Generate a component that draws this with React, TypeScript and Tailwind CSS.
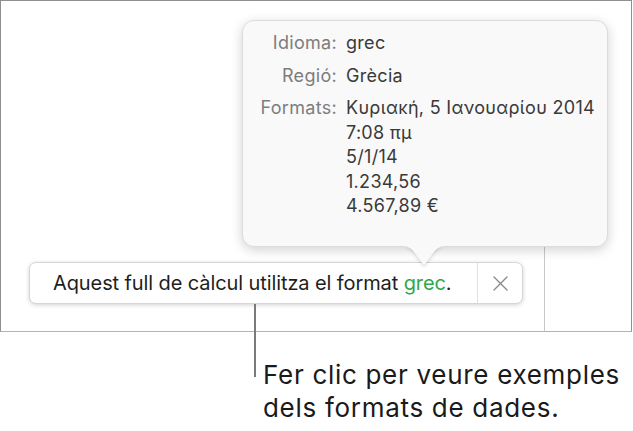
import React from 'react';

const font = { fontFamily: 'Inter, "Noto Sans", sans-serif' };

const rows: { label: string; values: string[] }[] = [
  { label: 'Idioma:', values: ['grec'] },
  { label: 'Regió:', values: ['Grècia'] },
  {
    label: 'Formats:',
    values: ['Κυριακή, 5 Ιανουαρίου 2014', '7:08 πμ', '5/1/14', '1.234,56', '4.567,89 €'],
  },
];

const Popover: React.FC = () => (
  <div className="absolute left-[242px] top-[20px] w-[366px] h-[227px]">
    {/* body */}
    <div className="relative z-10 w-full h-full rounded-[12px] bg-[#f9f9f9] border border-[#dcdcdc] shadow-[0_3px_12px_rgba(0,0,0,0.18)] pt-[10px]">
      <div className="flex flex-col gap-[8px]">
        {rows.map((r) => (
          <div key={r.label} className="flex">
            <div className="w-[94px] text-right text-[18px] leading-[24px] text-[#7d7d7d] tracking-[0.3px]">
              {r.label}
            </div>
            <div className="pl-[9px] flex flex-col text-[18px] leading-[24.5px] text-[#3a3a3a] tracking-[0.3px]">
              {r.values.map((v) => (
                <span key={v}>{v}</span>
              ))}
            </div>
          </div>
        ))}
      </div>
    </div>
    {/* arrow */}
    <svg
      className="absolute z-20 left-[158px] top-[225px]"
      width="48"
      height="22"
      viewBox="0 0 48 22"
      style={{ filter: 'drop-shadow(0 2px 1.5px rgba(0,0,0,0.14))' }}
    >
      <path d="M0 1 C8 1 10 2 14 7 L23 19 Q24 20.5 25 19 L34 7 C38 2 40 1 48 1 Z" fill="#f9f9f9" />
    </svg>
  </div>
);

export default function App() {
  return (
    <div className="relative w-[633px] h-[431px] bg-white overflow-hidden" style={font}>
      {/* spreadsheet frame */}
      <div className="w-[632px] h-[332px] border border-[#8f8f8f] border-b-[#b4b4b4] flex flex-col">
        <div className="h-[246px]" />
        <div className="flex flex-1">
          <div className="w-[544px] border-r border-[#c8c8c8] pl-[28px] pt-[15px]">
            {/* notice bar */}
            <div className="flex items-stretch w-[494px] h-[42px] bg-white rounded-[7px] border border-[#d6d6d6] shadow-[0_1px_4px_rgba(0,0,0,0.18)]">
              <div className="flex-1 flex items-center pl-[23px] text-[20px] text-[#1e1e1e] tracking-[-0.1px] whitespace-nowrap">
                Aquest full de càlcul utilitza el format&nbsp;<span className="text-[#2ea84a]">grec</span>.
              </div>
              <div className="w-[45px] border-l border-[#e0e0e0] flex items-center justify-center">
                <svg width="15" height="15" viewBox="0 0 15 15">
                  <path d="M1 1 L14 14 M14 1 L1 14" stroke="#8a8a8a" strokeWidth="1.4" strokeLinecap="round" />
                </svg>
              </div>
            </div>
          </div>
          <div className="flex-1" />
        </div>
      </div>

      <Popover />

      {/* callout */}
      <div className="absolute left-[254px] top-[304px] w-[2px] h-[73px] bg-[#7a7a7a]" />
      <div className="pl-[263px] pt-[26px] text-[26px] leading-[33px] text-[#1a1a1a] tracking-[0.7px]">
        <div>Fer clic per veure exemples</div>
        <div>dels formats de dades.</div>
      </div>
    </div>
  );
}
